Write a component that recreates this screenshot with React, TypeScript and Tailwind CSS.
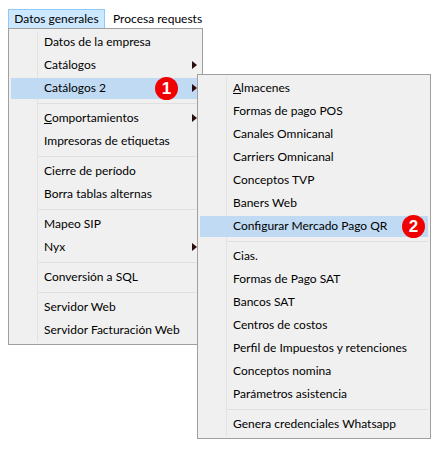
import type { ReactNode } from 'react';

type Item = { label: ReactNode; arrow?: boolean; active?: boolean; badge?: string };

const mainGroups: Item[][] = [
  [
    { label: 'Datos de la empresa' },
    { label: 'Catálogos', arrow: true },
    { label: 'Catálogos 2', arrow: true, active: true, badge: '1' },
  ],
  [
    { label: <><u>C</u>omportamientos</>, arrow: true },
    { label: 'Impresoras de etiquetas' },
  ],
  [{ label: 'Cierre de período' }, { label: 'Borra tablas alternas' }],
  [{ label: 'Mapeo SIP' }, { label: 'Nyx', arrow: true }],
  [{ label: 'Conversión a SQL' }],
  [{ label: 'Servidor Web' }, { label: 'Servidor Facturación Web' }],
];

const subGroups: Item[][] = [
  [
    { label: <><u>A</u>lmacenes</> },
    { label: 'Formas de pago POS' },
    { label: 'Canales Omnicanal' },
    { label: 'Carriers Omnicanal' },
    { label: 'Conceptos TVP' },
    { label: 'Baners Web' },
    { label: 'Configurar Mercado Pago QR', active: true, badge: '2' },
  ],
  [
    { label: 'Cias.' },
    { label: 'Formas de Pago SAT' },
    { label: 'Bancos SAT' },
    { label: 'Centros de costos' },
    { label: 'Perfil de Impuestos y retenciones' },
    { label: 'Conceptos nomina' },
    { label: 'Parámetros asistencia' },
  ],
  [{ label: 'Genera credenciales Whatsapp' }],
];

function Badge({ value }: { value: string }) {
  return (
    <span className="absolute top-[0px] flex h-[23px] w-[23px] items-center justify-center rounded-full bg-[#f00000] font-['Liberation_Sans',sans-serif] text-[17px] leading-none font-bold text-white">
      {value}
    </span>
  );
}

function Row({ item, badgeClass }: { item: Item; badgeClass: string }) {
  return (
    <div className="relative h-[23px] py-px">
      <div
        className={`flex h-[21px] items-center pb-[2px] pl-[33px] text-[12px] text-[#000] ${item.active ? 'bg-[#bfdaf2]' : ''}`}
      >
        <span className="whitespace-nowrap">{item.label}</span>
      </div>
      {item.badge && (
        <div className={badgeClass}>
          <Badge value={item.badge} />
        </div>
      )}
      {item.arrow && (
        <span className="absolute top-[7px] right-[3px] h-0 w-0 border-y-[4px] border-l-[5px] border-y-transparent border-l-[#2a0c0c]" />
      )}
    </div>
  );
}

function Menu({ groups, badgeClass, className }: { groups: Item[][]; badgeClass: string; className: string }) {
  return (
    <div className={`border border-[#a0a0a0] bg-[#f0f0f0] py-[2px] pr-[2px] pl-[2px] ${className}`}>
      <div className="relative">
        <div className="absolute top-0 bottom-0 left-[26px] w-px bg-[#e3e3e3]" />
        {groups.map((group, i) => (
          <div key={i}>
            {i > 0 && (
              <div className="flex h-[7px] items-center pl-[27px]">
                <div className="h-px w-full bg-[#e0e0e0]" />
              </div>
            )}
            {group.map((item, j) => (
              <Row key={j} item={item} badgeClass={badgeClass} />
            ))}
          </div>
        ))}
      </div>
    </div>
  );
}

export default function App() {
  return (
    <div className="h-[449px] w-[440px] overflow-hidden bg-white pt-[9px] pl-[8px] font-['Lato','Noto_Sans',sans-serif]">
      <div className="flex h-[19px] items-stretch text-[12px] text-black">
        <div className="flex w-[97px] items-center justify-center border border-b-0 border-[#90c8f6] bg-[#cce8ff]">
          Datos generales
        </div>
        <div className="flex items-center px-[8px]">Procesa requests</div>
      </div>
      <div className="relative">
        <Menu groups={mainGroups} badgeClass="absolute top-0 left-[144px]" className="w-[195px]" />
        <div className="absolute top-[46px] left-[189px]">
          <Menu groups={subGroups} badgeClass="absolute top-0 left-[202px]" className="w-[234px]" />
        </div>
      </div>
    </div>
  );
}
